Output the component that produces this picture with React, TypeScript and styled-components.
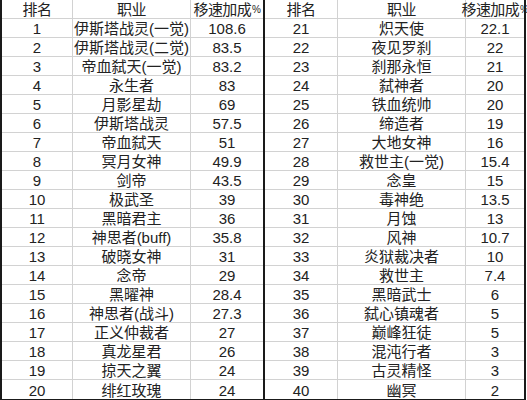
import React from "react";
import styled, { createGlobalStyle } from "styled-components";

const GlobalStyle = createGlobalStyle`
  html, body {
    margin: 0;
    padding: 0;
    background: #ffffff;
  }
  body {
    font-family: "Liberation Sans", "Noto Sans CJK SC", sans-serif;
    color: #222222;
  }
`;

type Row = [string, string, string];

const leftRows: Row[] = [
  ["1", "伊斯塔战灵(一觉)", "108.6"],
  ["2", "伊斯塔战灵(二觉)", "83.5"],
  ["3", "帝血弑天(一觉)", "83.2"],
  ["4", "永生者", "83"],
  ["5", "月影星劫", "69"],
  ["6", "伊斯塔战灵", "57.5"],
  ["7", "帝血弑天", "51"],
  ["8", "冥月女神", "49.9"],
  ["9", "剑帝", "43.5"],
  ["10", "极武圣", "39"],
  ["11", "黑暗君主", "36"],
  ["12", "神思者(buff)", "35.8"],
  ["13", "破晓女神", "31"],
  ["14", "念帝", "29"],
  ["15", "黑曜神", "28.4"],
  ["16", "神思者(战斗)", "27.3"],
  ["17", "正义仲裁者", "27"],
  ["18", "真龙星君", "26"],
  ["19", "掠天之翼", "24"],
  ["20", "绯红玫瑰", "24"],
];

const rightRows: Row[] = [
  ["21", "炽天使", "22.1"],
  ["22", "夜见罗刹", "22"],
  ["23", "刹那永恒", "21"],
  ["24", "弑神者", "20"],
  ["25", "铁血统帅", "20"],
  ["26", "缔造者", "19"],
  ["27", "大地女神", "16"],
  ["28", "救世主(一觉)", "15.4"],
  ["29", "念皇", "15"],
  ["30", "毒神绝", "13.5"],
  ["31", "月蚀", "13"],
  ["32", "风神", "10.7"],
  ["33", "炎狱裁决者", "10"],
  ["34", "救世主", "7.4"],
  ["35", "黑暗武士", "6"],
  ["36", "弑心镇魂者", "5"],
  ["37", "巅峰狂徒", "5"],
  ["38", "混沌行者", "3"],
  ["39", "古灵精怪", "3"],
  ["40", "幽冥", "2"],
];

const Sheet = styled.div`
  display: flex;
  width: 527px;
  height: 400px;
  overflow: hidden;
  background: #ffffff;
`;

const Half = styled.div<{ $cols: string; $first?: boolean }>`
  display: grid;
  grid-template-columns: ${(p) => p.$cols};
  grid-auto-rows: 19px;
  border-left: ${(p) => (p.$first ? "2px solid #1a1a1a" : "none")};
  border-right: 2px solid #1a1a1a;
  border-bottom: 2px solid #1a1a1a;
  align-self: flex-start;
`;

const Cell = styled.div<{ $last?: boolean; $bottom?: boolean; $head?: boolean }>`
  box-sizing: border-box;
  height: 19px;
  display: flex;
  align-items: center;
  justify-content: center;
  border-right: ${(p) => (p.$last ? "none" : "1px solid #d2d2d2")};
  border-bottom: ${(p) => (p.$bottom ? "none" : "1px solid #d2d2d2")};
  font-size: 15px;
  line-height: 19px;
  letter-spacing: ${(p) => (p.$head ? "-0.6px" : "0")};
  white-space: nowrap;
  padding-top: 1px;
`;

const Pct = styled.span`
  font-size: 10px;
  letter-spacing: -0.5px;
  margin-left: 1px;
`;

const Table: React.FC<{ rows: Row[]; cols: string; first?: boolean }> = ({
  rows,
  cols,
  first,
}) => (
  <Half $cols={cols} $first={first}>
    <Cell $head>排名</Cell>
    <Cell $head>职业</Cell>
    <Cell $head $last>
      移速加成<Pct>%</Pct>
    </Cell>
    {rows.map((r, i) => {
      const bottom = i === rows.length - 1;
      return (
        <React.Fragment key={r[0]}>
          <Cell $bottom={bottom}>{r[0]}</Cell>
          <Cell $bottom={bottom}>{r[1]}</Cell>
          <Cell $bottom={bottom} $last>
            {r[2]}
          </Cell>
        </React.Fragment>
      );
    })}
  </Half>
);

export default function App() {
  return (
    <>
      <GlobalStyle />
      <Sheet>
        <Table rows={leftRows} cols="71px 118px 72px" first />
        <Table rows={rightRows} cols="73px 128px 58px" />
      </Sheet>
    </>
  );
}
